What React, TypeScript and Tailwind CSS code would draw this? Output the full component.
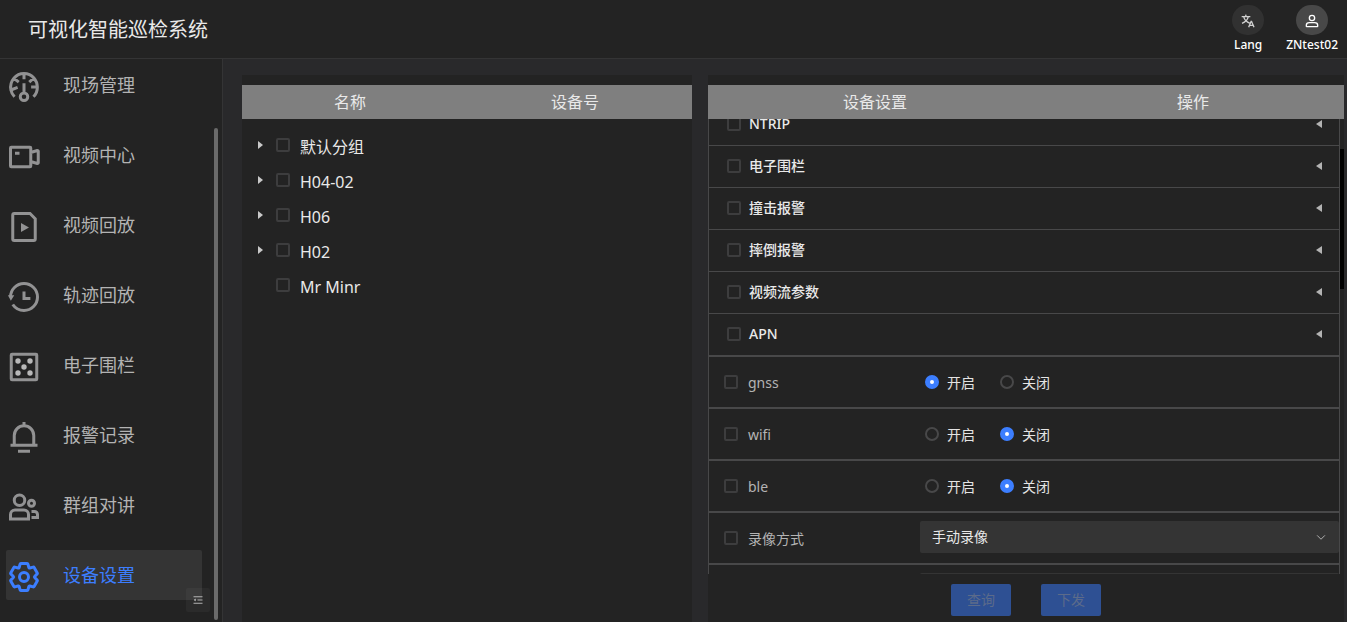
import { useState, type ReactNode } from 'react';

function Glyph({ size = 'size-9', children }: { size?: string; children: ReactNode }) {
  return (
    <svg viewBox="0 0 48 48" fill="none" stroke="currentColor" strokeWidth="4" className={`${size} shrink-0`} aria-hidden="true">
      {children}
    </svg>
  );
}

const navItems: { label: string; icon: ReactNode }[] = [
  {
    label: '现场管理',
    icon: (
      <path d="M41.808 24c.118 4.63-1.486 9.333-5.21 13m5.21-13h-8.309m8.309 0c-.112-4.38-1.767-8.694-4.627-12M24 6c5.531 0 10.07 2.404 13.18 6M24 6c-5.724 0-10.384 2.574-13.5 6.38M24 6v7.5M37.18 12 31 17.5m-20.5-5.12L17 17.5m-6.5-5.12C6.99 16.662 5.44 22.508 6.53 28m4.872 9c-2.65-2.609-4.226-5.742-4.873-9m0 0 8.97-3.5M24 32a5 5 0 1 0 0 10 5 5 0 0 0 0-10Zm0 0V19" />
    ),
  },
  {
    label: '视频中心',
    icon: (
      <path d="M33 18v12m0-12v-6a1 1 0 0 0-1-1H7a1 1 0 0 0-1 1v24a1 1 0 0 0 1 1h25a1 1 0 0 0 1-1v-6m0-12 8.713-2.614a1 1 0 0 1 1.287.958v15.312a1 1 0 0 1-1.287.958L33 30M12 19h6" />
    ),
  },
  {
    label: '视频回放',
    icon: (
      <>
        <path d="M37 42H11a2 2 0 0 1-2-2V8a2 2 0 0 1 2-2h21l7 7v27a2 2 0 0 1-2 2Z" />
        <path d="M22 22.2v5.2l4.6-2.6-4.6-2.6Z" />
      </>
    ),
  },
  {
    label: '轨迹回放',
    icon: (
      <>
        <path d="M6 24c0-9.941 8.059-18 18-18s18 8.059 18 18-8.059 18-18 18c-6.26 0-11.775-3.197-15-8.047" />
        <path d="M24 16.5V26h8.5" />
        <path d="M2.5 21.5h8.5L6.5 29Z" fill="currentColor" stroke="none" />
      </>
    ),
  },
  {
    label: '电子围栏',
    icon: (
      <>
        <rect x="7" y="7" width="34" height="34" rx="1" />
        <g fill="#b8b8b8" stroke="none">
          <circle cx="16" cy="16" r="3.6" />
          <circle cx="32" cy="16" r="3.6" />
          <circle cx="24" cy="24" r="3.6" />
          <circle cx="16" cy="32" r="3.6" />
          <circle cx="32" cy="32" r="3.6" />
        </g>
      </>
    ),
  },
  {
    label: '报警记录',
    icon: <path d="M24 9c7.18 0 13 5.82 13 13v13H11V22c0-7.18 5.82-13 13-13Zm0 0V4M6 35h36m-26 8h16" />,
  },
  {
    label: '群组对讲',
    icon: (
      <>
        <circle cx="18" cy="15" r="7" />
        <circle cx="34" cy="19" r="4" />
        <path d="M6 34a6 6 0 0 1 6-6h12a6 6 0 0 1 6 6v6H6v-6ZM34 30h4a4 4 0 0 1 4 4v4h-8" />
      </>
    ),
  },
  {
    label: '设备设置',
    icon: (
      <>
        <path d="M18.797 6.732A1 1 0 0 1 19.76 6h8.48a1 1 0 0 1 .964.732l1.285 4.628a1 1 0 0 0 1.213.7l4.651-1.2a1 1 0 0 1 1.116.468l4.24 7.344a1 1 0 0 1-.153 1.2L38.193 23.3a1 1 0 0 0 0 1.402l3.364 3.427a1 1 0 0 1 .153 1.2l-4.24 7.344a1 1 0 0 1-1.116.468l-4.65-1.2a1 1 0 0 0-1.214.7l-1.285 4.628a1 1 0 0 1-.964.732h-8.48a1 1 0 0 1-.963-.732L17.51 36.64a1 1 0 0 0-1.213-.7l-4.65 1.2a1 1 0 0 1-1.116-.468l-4.24-7.344a1 1 0 0 1 .153-1.2L9.809 24.7a1 1 0 0 0 0-1.402l-3.364-3.427a1 1 0 0 1-.153-1.2l4.24-7.344a1 1 0 0 1 1.116-.468l4.65 1.2a1 1 0 0 0 1.213-.7l1.286-4.628Z" />
        <path d="M30 24a6 6 0 1 1-12 0 6 6 0 0 1 12 0Z" />
      </>
    ),
  },
];

const groups = [
  { name: '默认分组', expandable: true },
  { name: 'H04-02', expandable: true },
  { name: 'H06', expandable: true },
  { name: 'H02', expandable: true },
  { name: 'Mr Minr', expandable: false },
];

const sections = ['NTRIP', '电子围栏', '撞击报警', '摔倒报警', '视频流参数', 'APN'];

const switches = [
  { name: 'gnss', on: true },
  { name: 'wifi', on: false },
  { name: 'ble', on: false },
];

const boxClass =
  'size-[14px] shrink-0 appearance-none rounded-[2px] border-2 border-[#3d3d3e] checked:border-[#3c7eff] checked:bg-[#3c7eff]';

function Check({ id }: { id: string }) {
  return <input type="checkbox" id={id} className={boxClass} />;
}

function Radio({ name, label, checked, onChange }: { name: string; label: string; checked: boolean; onChange: () => void }) {
  return (
    <label className="flex items-center gap-2 text-sm text-[#e4e4e4]">
      <input
        type="radio"
        name={name}
        checked={checked}
        onChange={onChange}
        className="size-[14px] appearance-none rounded-full border-2 border-[#484849] checked:border-5 checked:border-[#3c7eff] checked:bg-white"
      />
      <span className="pt-[2px]">{label}</span>
    </label>
  );
}

function SwitchRow({ name, on }: { name: string; on: boolean }) {
  const [enabled, setEnabled] = useState(on);
  return (
    <div className="flex h-[52px] shrink-0 items-center border border-[#484849]">
      <div className="flex w-[211px] shrink-0 items-center gap-[10px] pl-[15px]">
        <Check id={`check-${name}`} />
        <label htmlFor={`check-${name}`} className="pt-[2px] text-sm text-[#b3b3b3]">
          {name}
        </label>
      </div>
      <div className="flex items-center gap-[25px] pl-[5px]">
        <Radio name={name} label="开启" checked={enabled} onChange={() => setEnabled(true)} />
        <Radio name={name} label="关闭" checked={!enabled} onChange={() => setEnabled(false)} />
      </div>
    </div>
  );
}

function SelectBox({ label, options }: { label: string; options: string[] }) {
  return (
    <div className="relative h-8 flex-1">
      <select
        aria-label={label}
        className="block h-8 w-full appearance-none rounded-[2px] bg-[#343434] px-3 text-sm text-[#e9e9e9]"
      >
        {options.map((o) => (
          <option key={o}>{o}</option>
        ))}
      </select>
      <span className="pointer-events-none absolute inset-y-0 right-3 flex items-center text-[#b0b0b0]">
        <Glyph size="size-3">
          <path d="M39.6 17.443 24.043 33 8.487 17.443" />
        </Glyph>
      </span>
    </div>
  );
}

function ActionButton({ children }: { children: string }) {
  return (
    <button disabled className="h-8 w-[60px] rounded-[2px] bg-[#2e5093] text-sm text-[#5c6b8a]">
      {children}
    </button>
  );
}

export default function App() {
  const [active, setActive] = useState('设备设置');
  return (
    <div className="flex h-screen flex-col overflow-hidden bg-[#29292b] font-['Noto_Sans','Noto_Sans_CJK_SC',sans-serif] text-[#e9e9e9]">
      <header className="flex h-[59px] shrink-0 items-center justify-between border-b border-[#343435] bg-[#232323] pt-[2px] pr-[9px] pl-7">
        <h1 className="text-xl">可视化智能巡检系统</h1>
        <div className="flex gap-[22px] text-xs font-medium text-white">
          <button className="flex flex-col items-center">
            <span className="flex h-[30px] w-8 items-center justify-center rounded-full bg-[#313131] pt-[2px] text-[#d0d0d0]">
              <Glyph size="size-4">
                <path d="m42 43-2.385-6M26 43l2.384-6m11.231 0-.795-2-4.18-10h-1.28l-4.181 10-.795 2m11.231 0h-11.23M17 5l1 5M5 11h26M11 11s1.889 7.826 6.611 12.174C22.333 27.522 30 31 30 31M25 11s-1.889 7.826-6.611 12.174C13.667 27.522 6 31 6 31" />
              </Glyph>
            </span>
            <span className="leading-5">Lang</span>
          </button>
          <button className="flex flex-col items-center">
            <span className="flex h-[30px] w-8 items-center justify-center rounded-full bg-[#484848] pt-[2px]">
              <Glyph size="size-4">
                <path d="M7 37c0-4.97 4.03-8 9-8h16c4.97 0 9 3.03 9 8v3a1 1 0 0 1-1 1H8a1 1 0 0 1-1-1v-3Z" />
                <circle cx="24" cy="15" r="8" />
              </Glyph>
            </span>
            <span className="leading-5">ZNtest02</span>
          </button>
        </div>
      </header>

      <div className="flex min-h-0 flex-1">
        <aside className="relative flex w-[223px] shrink-0 justify-between border-r border-[#343435] bg-[#232323] pr-1">
          <nav className="flex w-[202px] flex-col gap-5 overflow-hidden pt-px pl-[6px]">
            {navItems.map((item) => (
              <a
                key={item.label}
                href="#"
                onClick={() => setActive(item.label)}
                className={`flex h-[50px] shrink-0 items-center gap-[21px] rounded-[2px] text-lg ${
                  active === item.label ? 'bg-[#343434] text-[#3c7eff]' : 'text-[#b3b3b3]'
                }`}
              >
                <span className={`pt-1 ${active === item.label ? '' : 'text-[#929293]'}`}>
                  <Glyph>{item.icon}</Glyph>
                </span>
                {item.label}
              </a>
            ))}
          </nav>
          <div className="mt-[69px] mb-[2px] w-1 rounded-full bg-[#6a6a6a]" />
          <button
            aria-label="收起菜单"
            className="absolute right-3 bottom-[10px] flex size-6 items-center justify-center rounded-[2px] bg-white/4 text-[#b3b3b3]"
          >
            <Glyph size="size-3">
              <path d="M42 11H6M42 24H22M42 37H6M13.66 26.912l-4.82-3.118 4.82-3.118v6.236Z" />
            </Glyph>
          </button>
        </aside>

        <main className="grid min-w-0 flex-1 grid-cols-[450fr_636fr] gap-4 pt-4 pr-[3px] pl-[19px]">
          <section className="flex min-h-0 flex-col bg-[#232323] pt-[10px]">
            <div className="grid h-[34px] shrink-0 grid-cols-[216fr_234fr] items-center bg-[#7f7f7f] text-center text-base">
              <span>名称</span>
              <span>设备号</span>
            </div>
            <ul className="pt-[9px] pl-4">
              {groups.map((g) => (
                <li key={g.name} className="flex h-[35px] items-center pb-[2px]">
                  <span className="w-[18px] text-[#c9c9c9]">
                    {g.expandable && (
                      <svg viewBox="0 0 5 8" className="h-2 w-[5px]" fill="currentColor" aria-hidden="true">
                        <path d="M0 0v8l5-4Z" />
                      </svg>
                    )}
                  </span>
                  <Check id={`group-${g.name}`} />
                  <label htmlFor={`group-${g.name}`} className="pt-[5px] pl-[10px] text-base">
                    {g.name}
                  </label>
                </li>
              ))}
            </ul>
          </section>

          <section className="flex min-h-0 flex-col bg-[#232323] pt-[10px]">
            <div className="grid h-[34px] shrink-0 grid-cols-[334fr_302fr] items-center bg-[#7f7f7f] text-center text-base">
              <span>设备设置</span>
              <span>操作</span>
            </div>
            <div className="flex min-h-0 flex-1 overflow-hidden">
              <div className="-mt-[15px] flex min-w-0 flex-1 flex-col">
                <div className="border-x border-[#484849]">
                  {sections.map((s) => (
                    <div key={s} className="flex h-[42px] items-center gap-2 border-b border-[#484849] pr-[17px] pb-[2px] pl-[18px]">
                      <Check id={`section-${s}`} />
                      <label htmlFor={`section-${s}`} className="flex-1 text-sm font-medium">
                        {s}
                      </label>
                      <svg viewBox="0 0 6 8" className="h-2 w-[6px] text-[#b3b3b3]" fill="currentColor" aria-hidden="true">
                        <path d="M6 0v8L0 4Z" />
                      </svg>
                    </div>
                  ))}
                </div>
                {switches.map((s) => (
                  <SwitchRow key={s.name} name={s.name} on={s.on} />
                ))}
                <div className="flex h-[52px] shrink-0 border border-[#484849] pt-2">
                  <div className="flex w-[211px] shrink-0 items-center gap-[10px] pb-2 pl-[15px]">
                    <Check id="check-record" />
                    <label htmlFor="check-record" className="pt-[2px] text-sm text-[#b3b3b3]">
                      录像方式
                    </label>
                  </div>
                  <SelectBox label="录像方式" options={['手动录像', '自动录像']} />
                </div>
                <div className="flex h-[52px] shrink-0 border border-[#484849] pt-2 pl-[211px]">
                  <SelectBox label="录像时长" options={['5', '10']} />
                </div>
              </div>
              <div className="w-1 shrink-0 pt-[30px]">
                <div className="h-[140px] bg-black" />
              </div>
            </div>
            <div className="flex shrink-0 justify-center gap-[30px] pt-[10px] pb-[6px]">
              <ActionButton>查询</ActionButton>
              <ActionButton>下发</ActionButton>
            </div>
          </section>
        </main>
      </div>
    </div>
  );
}
